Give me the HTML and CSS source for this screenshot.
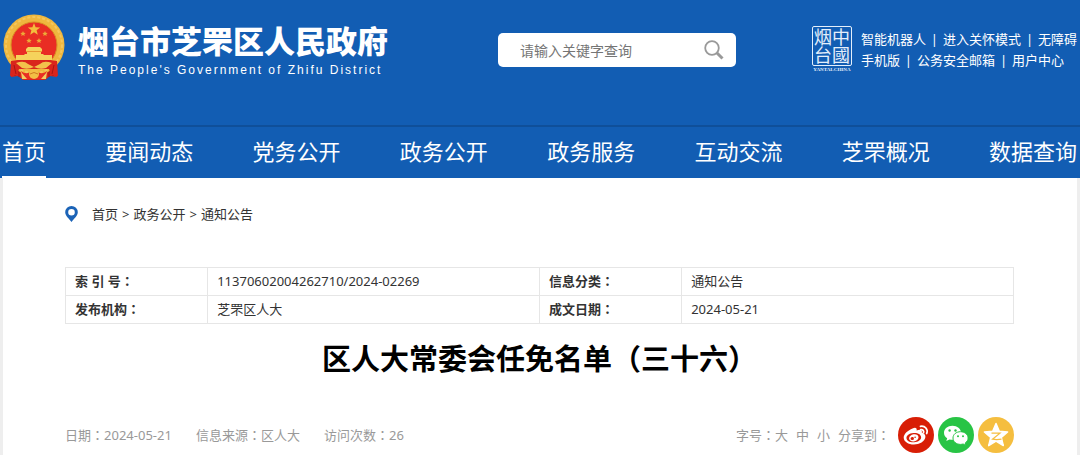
FILE: index.html
```html
<!DOCTYPE html>
<html lang="zh-CN">
<head>
<meta charset="utf-8">
<meta name="viewport" content="width=device-width, initial-scale=1">
<title>区人大常委会任免名单（三十六）</title>
<link rel="stylesheet" href="styles.css">
</head>
<body>
<header class="header">
  <div class="masthead">
    <a class="brand" href="#">
      <svg class="emblem" viewBox="0 0 62 67" aria-hidden="true">
        <path d="M9 44 L8 63 L15 62 L20 66 L42 66 L47 62 L54 63 L53 44Z" fill="#d9251c"/>
        <path d="M12 50v12M16 54v9M50 50v12M46 54v9" stroke="#a51612" fill="none"/>
        <circle cx="31" cy="31" r="30.5" fill="#efb73e"/>
        <circle cx="31" cy="31" r="28" fill="none" stroke="#f4c65c" stroke-width="2" stroke-dasharray="3 2"/>
        <circle cx="31" cy="31" r="23" fill="#e92d24" stroke="#d98e24"/>
        <path d="M31 9l1.600 4.300 4.600.2-3.600 2.800 1.200 4.500-3.800-2.600-3.800 2.600 1.200-4.500-3.600-2.800 4.600-.2z" fill="#f3bd3d"/>
        <g fill="#edaa38">
          <path id="star" d="M20 17l.8 1.700 1.900.2-1.400 1.300.4 1.900-1.700-1-1.700 1 .4-1.900-1.400-1.300 1.900-.2z"/>
          <use href="#star" x="22"/><use href="#star" x="6" y="7"/><use href="#star" x="16" y="7"/>
        </g>
        <path d="M23 35l2-2h12l2 2v2h-1v3h2l1 1h8v5H13v-5h8l1-1h2v-3h-1z" fill="#f5d35c"/>
        <path d="M23 37.500h16" stroke="#e79b31" fill="none"/>
        <path d="M8 47l7-1h32l7 1 1 15-7-1-2-6H16l-2 6-7 1z" fill="#d9251c"/>
        <path d="M13 49q8-3 12 1l6 3 6-3q4-4 12-1l-6 5q-6 2-12-1-6 3-12 1z" fill="#f2c24b"/>
        <path d="M11 51l2 9M51 51l-2 9" stroke="#a51612" fill="none"/>
        <path d="M18 57q5 4 9 1l4-3 4 3q4 3 9-1l-4 8H22z" fill="#e92d24"/>
        <path d="M18 58l6 7h-5zM44 58l-6 7h5z" fill="#f3cd61"/>
        <circle cx="31" cy="60" r="5" fill="#f2bf45"/>
        <path d="M27 60q4-3 8 0" stroke="#cf7d21" fill="none"/>
      </svg>
      <span class="brand-text">
        <span class="brand-name">烟台市芝罘区人民政府</span>
        <span class="brand-en">The People's Government of Zhifu District</span>
      </span>
    </a>
    <form class="search" role="search">
      <input class="search-input" type="text" placeholder="请输入关键字查询" aria-label="请输入关键字查询">
      <button class="search-button" type="button" aria-label="搜索">
        <svg width="20" height="20" viewBox="0 0 20 20" fill="none" stroke="#999" aria-hidden="true">
          <circle cx="8" cy="8" r="6.800" stroke-width="1.800"/>
          <path d="M13 13l5.500 5.500" stroke-width="3"/>
        </svg>
      </button>
    </form>
    <div class="tools">
      <div class="seal">
        <div class="seal-char" lang="zh-TW">中國烟台</div>
        <div class="seal-caption">YANTAI-CHINA</div>
      </div>
      <div class="tool-links">
        <div class="tool-row"><a href="#">智能机器人</a><span class="bar">|</span><a href="#">进入关怀模式</a><span class="bar">|</span><a href="#">无障碍</a></div>
        <div class="tool-row"><a href="#">手机版</a><span class="bar">|</span><a href="#">公务安全邮箱</a><span class="bar">|</span><a href="#">用户中心</a></div>
      </div>
    </div>
  </div>
  <nav class="nav">
    <a class="nav-link is-current" href="#">首页</a>
    <a class="nav-link" href="#">要闻动态</a>
    <a class="nav-link" href="#">党务公开</a>
    <a class="nav-link" href="#">政务公开</a>
    <a class="nav-link" href="#">政务服务</a>
    <a class="nav-link" href="#">互动交流</a>
    <a class="nav-link" href="#">芝罘概况</a>
    <a class="nav-link" href="#">数据查询</a>
  </nav>
</header>
<main class="page">
  <div class="breadcrumb">
    <svg width="13" height="16" viewBox="0 0 13 16" aria-hidden="true">
      <path fill="#1b63b7" fill-rule="evenodd" d="M6.500 0A6.300 6.300 0 0 0 .2 6.300C.2 10 4 12.500 6.500 16 9 12.500 12.800 10 12.800 6.300A6.300 6.300 0 0 0 6.500 0zm0 3a3.300 3.300 0 1 1 0 6.600 3.300 3.300 0 0 1 0-6.600z"/>
    </svg>
    <div class="crumbs"><a href="#">首页</a><span>&gt;</span><a href="#">政务公开</a><span>&gt;</span><a href="#">通知公告</a></div>
  </div>
  <table class="info">
    <tbody>
      <tr><th scope="row">索 引 号<span class="mark" lang="zh-TW">：</span></th><td>11370602004262710/2024-02269</td><th scope="row">信息分类<span class="mark" lang="zh-TW">：</span></th><td>通知公告</td></tr>
      <tr><th scope="row">发布机构<span class="mark" lang="zh-TW">：</span></th><td>芝罘区人大</td><th scope="row">成文日期<span class="mark" lang="zh-TW">：</span></th><td>2024-05-21</td></tr>
    </tbody>
  </table>
  <h1 class="title">区人大常委会任免名单<span class="mark" lang="zh-TW">（</span>三十六<span class="mark" lang="zh-TW">）</span></h1>
  <div class="meta">
    <div class="facts">
      <span>日期<span class="mark" lang="zh-TW">：</span>2024-05-21</span>
      <span>信息来源<span class="mark" lang="zh-TW">：</span>区人大</span>
      <span>访问次数<span class="mark" lang="zh-TW">：</span>26</span>
    </div>
    <div class="share">
      <div class="sizes"><span>字号<span class="mark" lang="zh-TW">：</span><button type="button">大</button></span><button type="button">中</button><button type="button">小</button></div>
      <span>分享到<span class="mark" lang="zh-TW">：</span></span>
      <div class="socials">
        <a href="#" aria-label="微博">
          <svg viewBox="0 0 36 36"><circle cx="18" cy="18" r="18" fill="#d81e06"/>
            <path fill="#fff" fill-rule="evenodd" d="M14.500 11.500c2.600-1.400 4.800-.8 4.100 2 3.300-1.300 6.200-.8 5.200 2.300 2.300.6 3.800 2 3.600 4.300-.4 4.400-6 7.500-11.500 7.500-5.600 0-10.200-2.700-10.200-7 0-3.600 4.400-7.400 8.800-9.100zM15.500 16c-4.200.3-7.300 2.600-7 5.300.2 2.600 3.600 4.400 7.700 4 4.100-.3 7.200-2.700 6.900-5.300-.2-2.700-3.500-4.400-7.600-4z"/>
            <path fill="#fff" fill-rule="evenodd" d="M15.500 17.300c2.700-.5 5 .8 5 3 0 2.100-2.200 4-4.800 4.100-2.600.2-4.700-1.100-4.600-3.200.1-1.900 2-3.500 4.400-3.900zm-1.300 2.800a1.700 1.500 0 1 0 .1 3 1.700 1.500 0 0 0-.1-3zm2.900-.7a.8.800 0 1 0 0 1.600.8.800 0 0 0 0-1.600z"/>
            <path d="M22.500 9.300c4.500-.8 7.800 3 6.200 7.200M22.800 12.600c2-.3 3.300 1.300 2.700 3.100" fill="none" stroke="#fff" stroke-width="1.800" stroke-linecap="round"/>
          </svg>
        </a>
        <a href="#" aria-label="微信">
          <svg viewBox="0 0 36 36"><circle cx="18" cy="18" r="18" fill="#28c445"/>
            <path fill="#fff" d="M14.500 8.800c-4.900 0-8.500 3-8.500 6.900 0 2.300 1.200 4.200 3.200 5.500l-.9 2.800 3.200-1.600c1.100.3 2 .4 3.200.4 4.700-.2 8.300-3.200 8.300-7 0-4-3.800-7-8.500-7z"/>
            <path fill="#fff" stroke="#28c445" stroke-width="1" d="M22.500 14.700c-4.300 0-7.500 2.700-7.500 6.300 0 3.700 3.400 6.400 7.500 6.400.9 0 1.800-.2 2.700-.4l2.700 1.500-.7-2.500c1.800-1.300 2.900-3 2.900-5 0-3.500-3.500-6.300-7.600-6.300z"/>
            <g fill="#28c445"><circle cx="11.600" cy="13.500" r="1.200"/><circle cx="17.500" cy="13.500" r="1.200"/><circle cx="20" cy="19.300" r="1"/><circle cx="25" cy="19.300" r="1"/></g>
          </svg>
        </a>
        <a href="#" aria-label="QQ空间">
          <svg viewBox="0 0 36 36"><circle cx="18" cy="18" r="18" fill="#f5be3f"/>
            <path fill="#fff" stroke="#fff" stroke-width="1.500" stroke-linejoin="round" d="M18 6.500l3.300 7.700 8.300.7-6.300 5.500 2 8.200-7.300-4.400-7.300 4.400 2-8.200-6.300-5.500 8.300-.7z"/>
            <path d="M13.500 16.200h8.500l-7.500 6q4 .8 9 0" fill="none" stroke="#f5be3f" stroke-width="1.200"/>
          </svg>
        </a>
      </div>
    </div>
  </div>
</main>
</body>
</html>
```

FILE: styles.css
```css
* {
  box-sizing: border-box;
}

body {
  margin: 0;
  background: #eee;
  color: #333;
  font: 13px/20px "Noto Sans", "Noto Sans CJK SC", sans-serif;
}

a {
  color: inherit;
  text-decoration: none;
}

button {
  padding: 0;
  border: 0;
  background: none;
  color: inherit;
  font: inherit;
}

svg {
  display: block;
}

.mark {
  font-family: "Noto Sans CJK TC", sans-serif;
}

.header {
  background: #125db3;
  color: #fff;
}

.masthead {
  display: flex;
  align-items: flex-start;
  justify-content: space-between;
  padding: 14px 3px 44px;
}

.brand {
  display: flex;
  gap: 13px;
}

.emblem {
  width: 62px;
  height: 67px;
}

.brand-text {
  display: flex;
  flex-direction: column;
  padding-top: 6px;
}

.brand-name {
  font-family: "Noto Sans CJK SC", sans-serif;
  font-size: 31px;
  font-weight: 900;
  line-height: 40px;
}

.brand-en {
  font: 12px/20px "Liberation Sans", sans-serif;
  letter-spacing: 2px;
}

.search {
  display: flex;
  width: 238px;
  height: 34px;
  margin: 19px 0 0 35px;
  padding: 0 12px 0 22px;
  border-radius: 5px;
  background: #fff;
}

.search-input {
  flex: 1;
  min-width: 0;
  padding: 0;
  border: 0;
  outline: 0;
  background: none;
  font: 14px/34px "Noto Sans CJK SC", sans-serif;
}

.search-input::placeholder {
  color: #757575;
}

.tools {
  display: flex;
  gap: 8px;
  padding-top: 12px;
}

.seal {
  width: 42px;
  color: #e4effb;
}

.seal-char {
  width: 40px;
  height: 40px;
  margin: 0 auto;
  padding: 1px;
  border: 1px solid #e4effb;
  border-radius: 2px;
  font: 18px/18px "Noto Sans CJK TC", sans-serif;
  writing-mode: vertical-rl;
}

.seal-caption {
  font: bold 5px/8px "Liberation Serif", serif;
  text-align: center;
}

.tool-links {
  padding-top: 3px;
}

.tool-row {
  display: flex;
  line-height: 21px;
}

.bar {
  width: 17px;
  text-align: center;
}

.nav {
  display: flex;
  justify-content: space-between;
  padding: 0 3px 0 2px;
  border-top: 2px solid #0f4f99;
}

.nav-link {
  padding-bottom: 1px;
  border-bottom: 2px solid transparent;
  font-size: 22px;
  line-height: 48px;
}

.is-current {
  border-color: #fff;
}

.page {
  margin: 0 3px;
  padding: 26px 63px 2px 62px;
  background: #fff;
}

.breadcrumb {
  display: flex;
  align-items: center;
  gap: 14px;
}

.crumbs {
  display: flex;
  gap: 4px;
}

.info {
  width: 100%;
  margin-top: 43px;
  border-collapse: collapse;
  table-layout: fixed;
}

.info th,
.info td {
  width: 35%;
  padding: 3px 9px 4px;
  border: 1px solid #e6e6e6;
  text-align: left;
}

.info th {
  width: 15%;
}

.title {
  margin: 11px 0 0;
  color: #000;
  font: bold 29px/44px "Noto Sans CJK SC", sans-serif;
  text-align: center;
}

.meta {
  display: flex;
  align-items: center;
  justify-content: space-between;
  margin-top: 38px;
  color: #999;
}

.facts {
  display: flex;
  gap: 24px;
}

.share,
.sizes {
  display: flex;
  align-items: center;
  gap: 8px;
}

.socials {
  display: flex;
  gap: 4px;
}

.socials svg {
  width: 36px;
  height: 36px;
}
```
